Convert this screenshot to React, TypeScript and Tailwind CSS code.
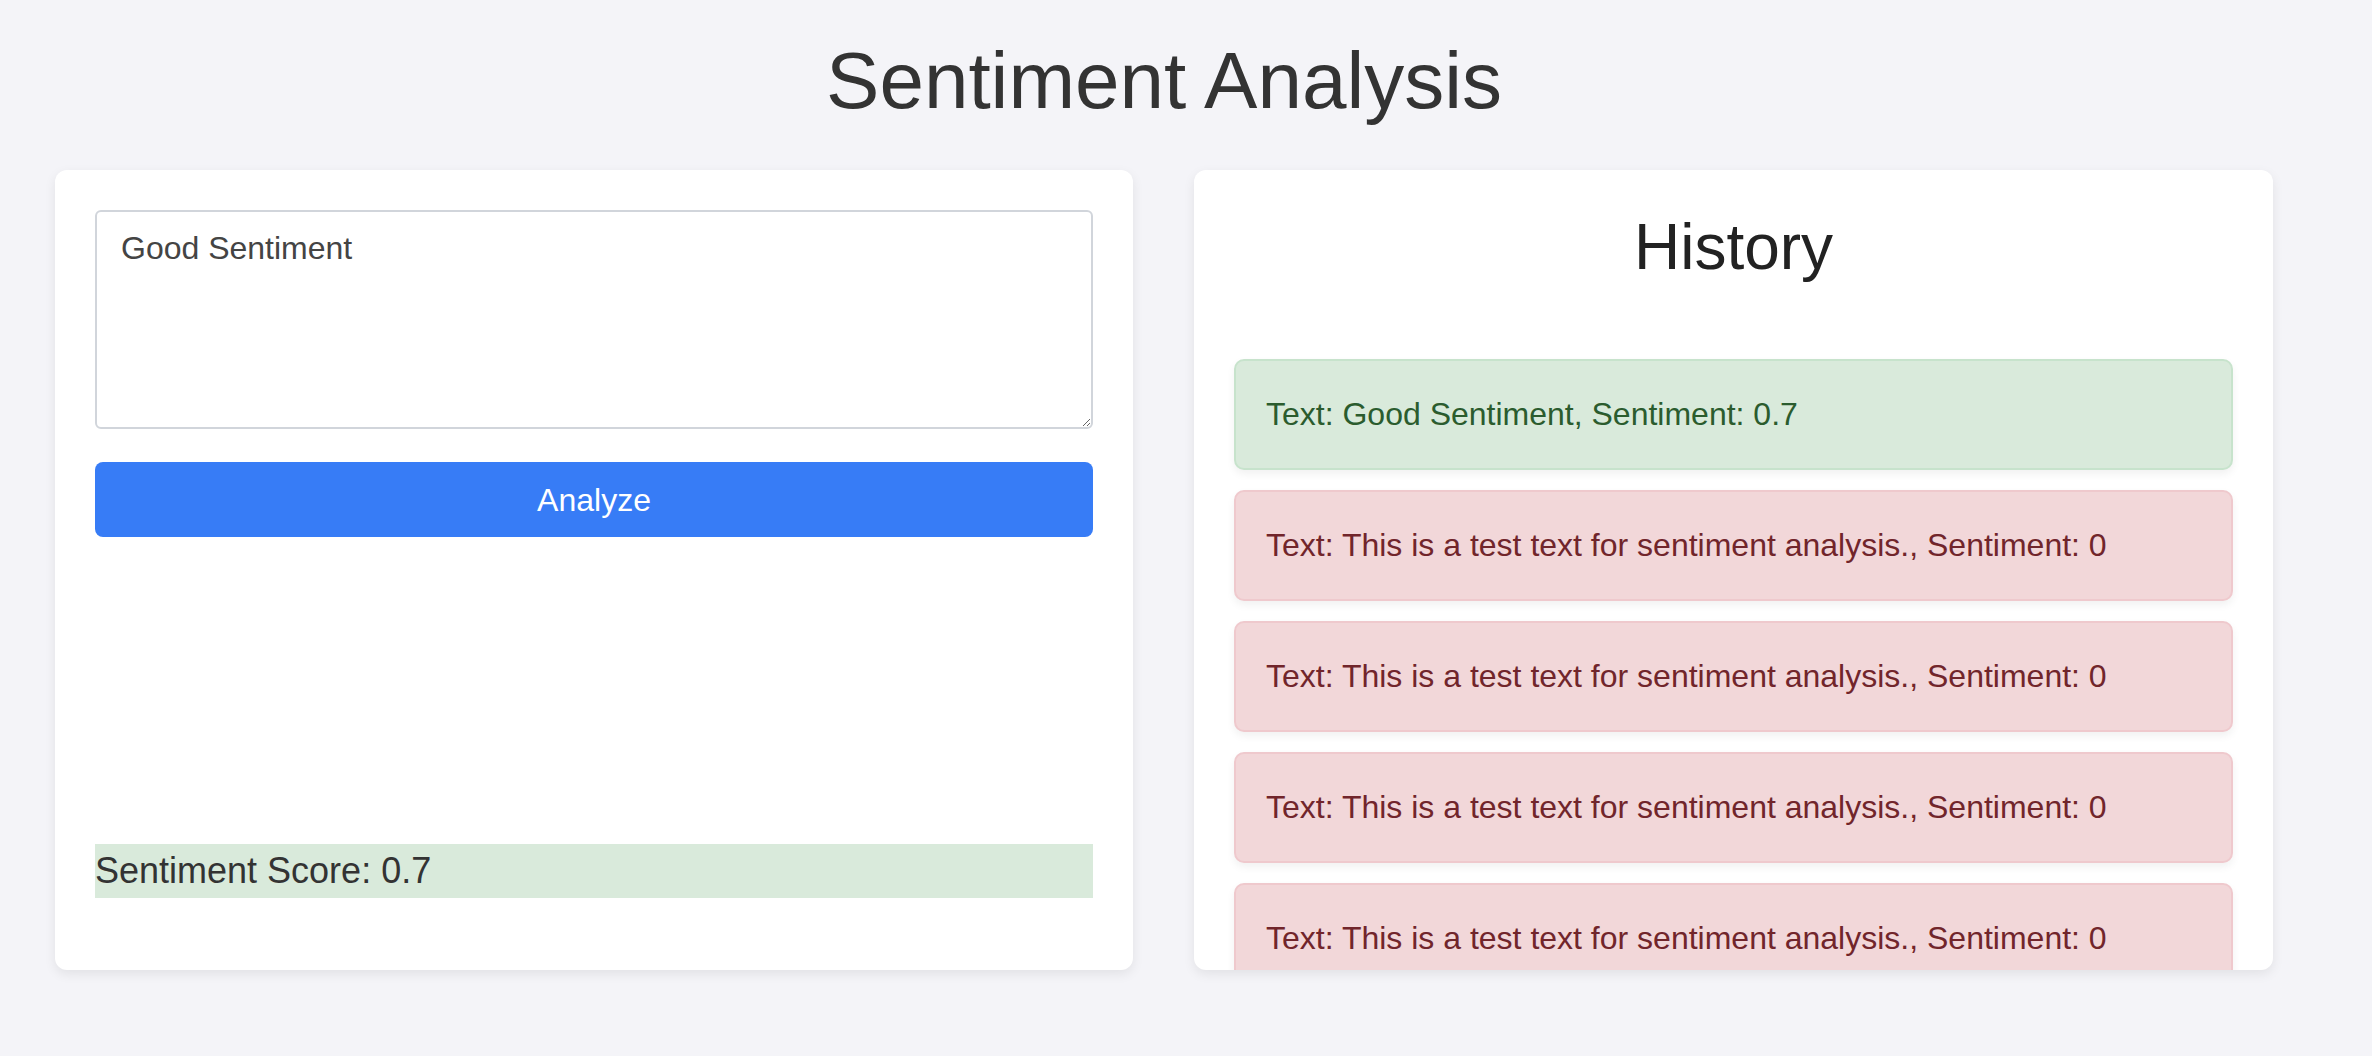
import { useState } from 'react';

type Entry = { text: string; sentiment: number };

const history: Entry[] = [
  { text: 'Good Sentiment', sentiment: 0.7 },
  { text: 'This is a test text for sentiment analysis.', sentiment: 0 },
  { text: 'This is a test text for sentiment analysis.', sentiment: 0 },
  { text: 'This is a test text for sentiment analysis.', sentiment: 0 },
  { text: 'This is a test text for sentiment analysis.', sentiment: 0 },
  { text: 'This is a test text for sentiment analysis.', sentiment: 0 },
];

function HistoryItem({ entry }: { entry: Entry }) {
  const positive = entry.sentiment > 0;
  return (
    <div
      className={
        positive
          ? 'mb-[20px] rounded-[10px] border-2 border-[#c7e3cc] bg-[#d9eadb] px-[30px] py-[30px] text-[32px] leading-[47px] text-[#2b5c2e] shadow-[0_4px_8px_rgba(0,0,0,0.06)]'
          : 'mb-[20px] rounded-[10px] border-2 border-[#efc9cd] bg-[#f2d7d9] px-[30px] py-[30px] text-[32px] leading-[47px] text-[#71252b] shadow-[0_4px_8px_rgba(0,0,0,0.06)]'
      }
    >
      Text: {entry.text}, Sentiment: {entry.sentiment}
    </div>
  );
}

export default function App() {
  const [text, setText] = useState('Good Sentiment');
  const score = 0.7;

  return (
    <div className="min-h-screen w-full bg-[#f4f4f8]" style={{ fontFamily: '"Liberation Sans", Arial, sans-serif' }}>
      <div className="w-[2328px]">
        <h1 className="pt-[35px] mb-[43px] text-center text-[80px] leading-[92px] text-[#333]">Sentiment Analysis</h1>

        <div className="flex gap-[61px] px-[55px]">
          {/* input card */}
          <div className="flex h-[800px] w-[1078px] flex-col rounded-[12px] bg-white p-[40px] shadow-[0_4px_12px_rgba(0,0,0,0.08)]">
            <textarea
              value={text}
              onChange={(e) => setText(e.target.value)}
              className="block h-[219px] w-full resize-y rounded-[6px] border-2 border-[#d1d5db] px-[24px] py-[18px] text-[32px] leading-[37px] text-[#444] outline-none"
            />
            <button className="mt-[33px] h-[75px] w-full rounded-[8px] bg-[#377cf6] text-[32px] text-white">
              Analyze
            </button>
            <div className="mt-[307px] h-[54px] bg-[#d9eadb] text-[36px] leading-[54px] text-[#333]">
              Sentiment Score: {score}
            </div>
          </div>

          {/* history card */}
          <div className="h-[800px] w-[1079px] overflow-hidden rounded-[12px] bg-white p-[40px] shadow-[0_4px_12px_rgba(0,0,0,0.08)]">
            <h2 className="mb-[75px] text-center text-[64px] leading-[74px] text-[#222]">History</h2>
            <div>
              {history.map((entry, i) => (
                <HistoryItem key={i} entry={entry} />
              ))}
            </div>
          </div>
        </div>
      </div>
    </div>
  );
}
